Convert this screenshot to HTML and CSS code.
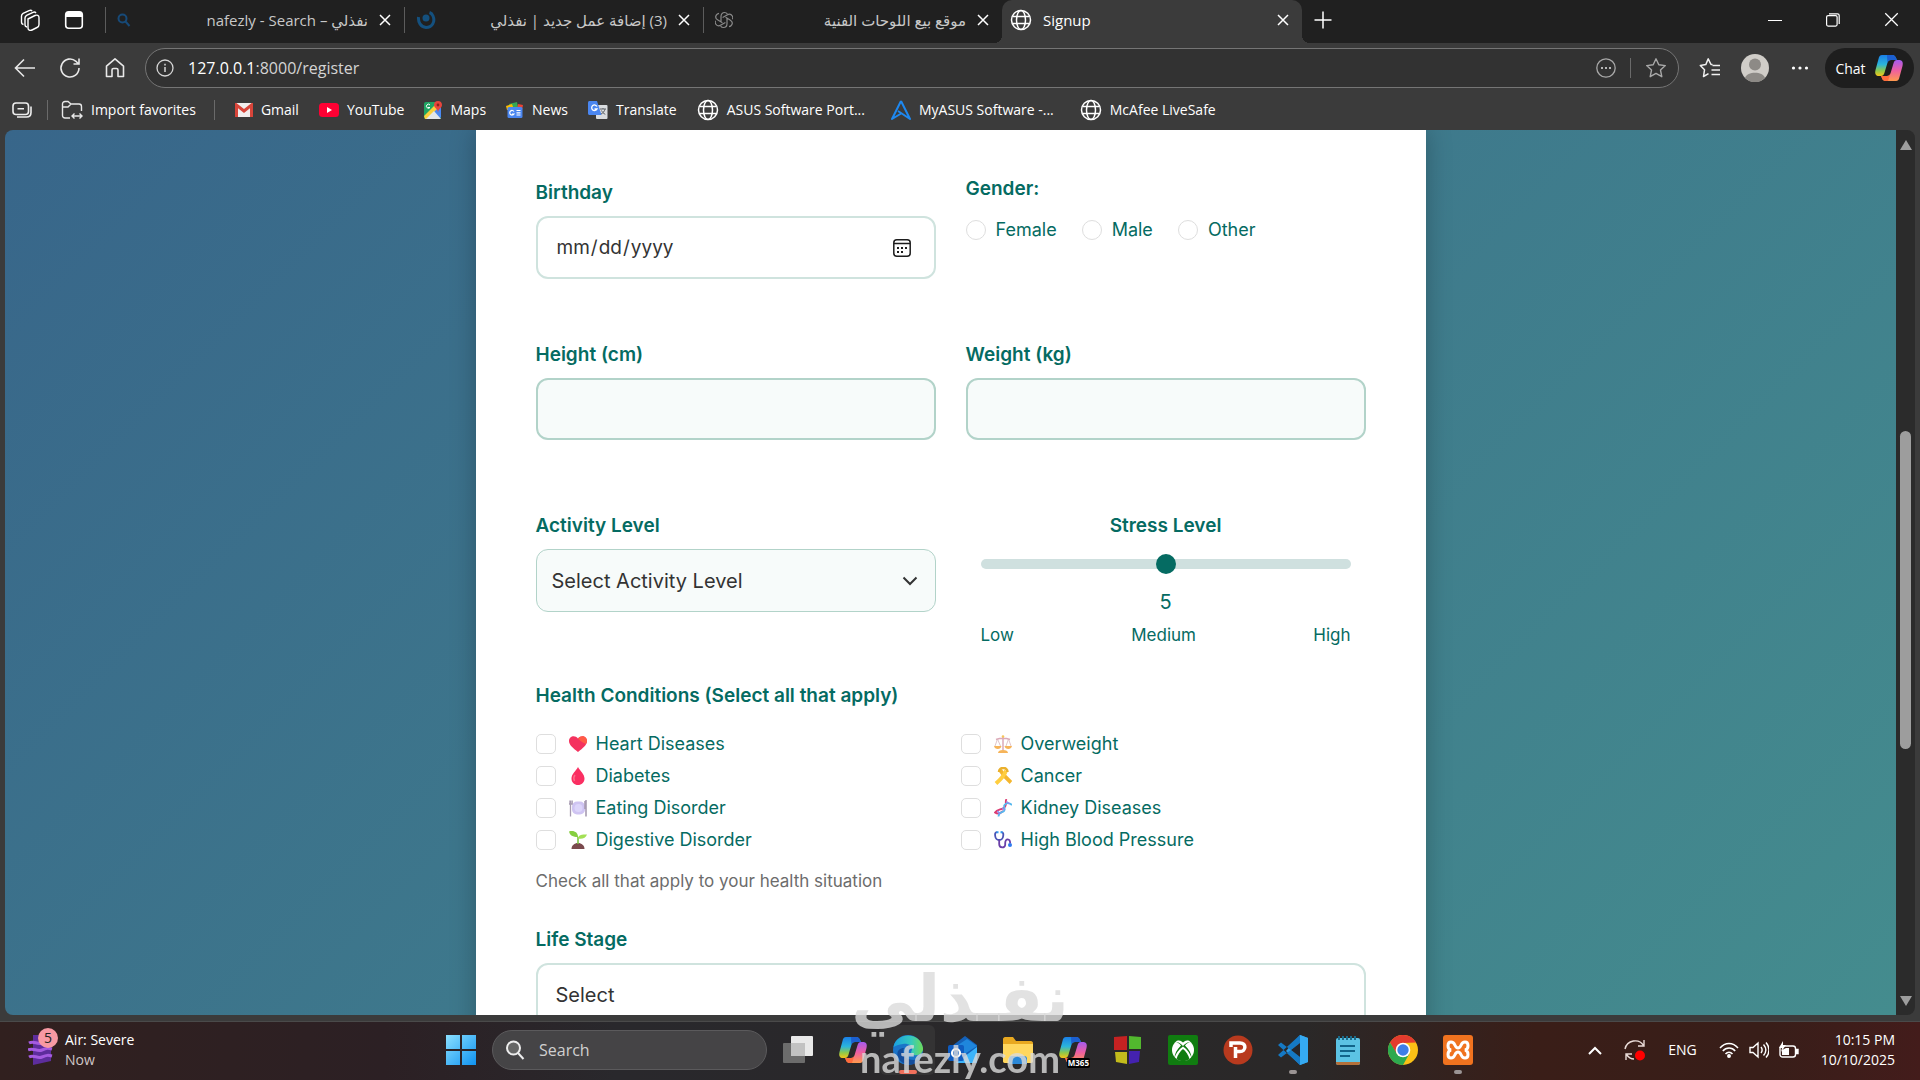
FILE: index.html
```html
<!DOCTYPE html>
<html lang="en">
<head>
  <meta charset="UTF-8">
  <title>Signup</title>
  <link rel="stylesheet" href="styles.css">
</head>
<body>

  <!-- shared icons -->
  <svg class="sprite" width="0" height="0" aria-hidden="true">
    <defs>
      <linearGradient id="cpBlue" x1="0" y1="0" x2="0" y2="1"><stop offset="0" stop-color="#1a7fe8"/><stop offset=".45" stop-color="#2bb5dc"/><stop offset=".75" stop-color="#8fc94a"/><stop offset="1" stop-color="#f5c518"/></linearGradient>
      <linearGradient id="cpPink" x1="0" y1="0" x2="0" y2="1"><stop offset="0" stop-color="#a45bf0"/><stop offset=".5" stop-color="#ee5fa0"/><stop offset="1" stop-color="#ff9a4d"/></linearGradient>
      <linearGradient id="edgeTop" x1="0" y1="0" x2="1" y2="0"><stop offset="0" stop-color="#1ba0e0"/><stop offset=".6" stop-color="#35c9bd"/><stop offset="1" stop-color="#6fdc57"/></linearGradient>
      <linearGradient id="winBlue" gradientUnits="userSpaceOnUse" x1="0" y1="0" x2="30" y2="30"><stop offset="0" stop-color="#8be0ff"/><stop offset="1" stop-color="#0f92f0"/></linearGradient>
    </defs>
    <symbol id="close" viewBox="0 0 12 12"><path d="M1 1l10 10M11 1L1 11" stroke="currentColor" stroke-width="1.5" fill="none"/></symbol>
    <symbol id="globe" viewBox="0 0 22 22"><g stroke="currentColor" stroke-width="1.5" fill="none"><circle cx="11" cy="11" r="9.5"/><ellipse cx="11" cy="11" rx="4.5" ry="9.5"/><path d="M2.500 7.500h17M2.500 14.500h17"/></g></symbol>
    <symbol id="copilot" viewBox="0 0 30 30">
      <path d="M8 2h10c3 0 4 2 4.800 5H17c-2 0-3 1-3.600 3l-3 10c-.6 2-1.600 3-3.400 3H5c-3 0-4.500-2-3.500-6L4.500 6C5 3.500 6 2 8 2z" fill="url(#cpBlue)"/>
      <path d="M13 2h5c3 0 4 2 4.800 5H17c-2 0-3 1-3.600 3z" fill="#1c5fd0"/>
      <path d="M22 28H12c-3 0-4-2-4.800-5H13c2 0 3-1 3.600-3l3-10c.6-2 1.600-3 3.400-3h2c3 0 4.500 2 3.500 6l-3 11c-.5 2.500-1.500 4-3.500 4z" fill="url(#cpPink)"/>
      <path d="M7.200 23H13c2 0 3-1 3.600-3L14 28h-2c-3 0-4-2-4.800-5z" fill="#ff6a3c"/>
    </symbol>
  </svg>

  <header class="browser">
    <div class="tab-strip">
      <div class="tab-actions">
        <button class="icon-btn" aria-label="Workspaces">
          <svg width="24" height="24" viewBox="0 0 24 24" fill="none" stroke="#fff" stroke-width="1.400"><path d="M10 11l7-3.500c2-1 4 0 4 2v7c0 1.500-.5 2.500-2 3l-5 2.500c-2 1-4 0-4-2z"/><path d="M9 19c-1.500-.2-2-1-2-2.500V10c0-1.200.6-2 1.600-2.600L15 4.300c1-.5 2.200-.4 3 .7"/><path d="M5.500 16.500C4 16.300 3.500 15.500 3.500 14V8c0-1.200.6-2 1.600-2.600l6-2.800c1.200-.5 2.400-.3 3 .6"/></svg>
        </button>
        <button class="icon-btn" aria-label="Tab actions">
          <svg width="20" height="20" viewBox="0 0 20 20"><rect x="1.700" y="1.700" width="16.600" height="16.600" rx="3" fill="none" stroke="#fff" stroke-width="1.600"/><path d="M2 2h16v5H2z" fill="#fff"/></svg>
        </button>
      </div>
      <div class="tab">
        <svg width="18" height="18" viewBox="0 0 18 18" fill="none" stroke="#174a78" stroke-width="2"><circle cx="5.500" cy="7.500" r="4"/><path d="M8.500 10.500l4 4.500"/></svg>
        <span class="tab-title" dir="rtl">نفذلي – nafezly - Search</span>
        <button class="icon-btn" aria-label="Close tab"><svg width="12" height="12"><use href="#close"/></svg></button>
      </div>
      <div class="tab">
        <svg width="20" height="20" viewBox="0 0 20 20"><circle cx="10" cy="8" r="3.500" fill="#14507e"/><path d="M2.500 7c-.5 5 2 10 7.500 10.500C16 17.500 19.500 12 17 6c-.6-1.500-2-3-3.500-3.500" fill="none" stroke="#14507e" stroke-width="3"/></svg>
        <span class="tab-title" dir="rtl">(3) إضافة عمل جديد | نفذلي</span>
        <button class="icon-btn" aria-label="Close tab"><svg width="12" height="12"><use href="#close"/></svg></button>
      </div>
      <div class="tab">
        <svg width="18" height="18" viewBox="0 0 18 18" fill="none" stroke="#8a8a8a" stroke-width="1.200"><path d="M6 10.700V5.500c0-2.300 1.500-4 3.500-4 1.200 0 2.200.5 2.900 1.400M7.600 6.500l4.500-2.600c2-1.100 4.200-.6 5.200 1.100.6 1 .6 2.200.2 3.200M10.600 6.300l4.500 2.600c2 1.200 2.600 3.300 1.600 5-.6 1-1.600 1.600-2.700 1.800M12 7.300v5.200c0 2.300-1.500 4-3.500 4-1.200 0-2.200-.5-2.900-1.400M10.400 11.500l-4.500 2.600c-2 1.100-4.200.6-5.200-1.100-.6-1-.6-2.200-.2-3.200M7.400 11.700L2.900 9.100C.9 7.900.3 5.800 1.300 4.100c.6-1 1.600-1.600 2.700-1.800"/></svg>
        <span class="tab-title" dir="rtl">موقع بيع اللوحات الفنية</span>
        <button class="icon-btn" aria-label="Close tab"><svg width="12" height="12"><use href="#close"/></svg></button>
      </div>
      <div class="tab active">
        <svg width="22" height="22"><use href="#globe"/></svg>
        <span class="tab-title">Signup</span>
        <button class="icon-btn" aria-label="Close tab"><svg width="12" height="12"><use href="#close"/></svg></button>
      </div>
      <button class="icon-btn new-tab" aria-label="New tab"><svg width="20" height="20" viewBox="0 0 20 20"><path d="M10 1.500v17M1.500 10h17" stroke="#fff" stroke-width="1.500"/></svg></button>
      <div class="window-controls">
        <button class="icon-btn" aria-label="Minimize"><svg width="14" height="14" viewBox="0 0 14 14"><path d="M0 7.500h14" stroke="#fff"/></svg></button>
        <button class="icon-btn" aria-label="Restore"><svg width="14" height="14" viewBox="0 0 14 14" fill="none" stroke="#fff" stroke-width="1.200"><rect x=".6" y="2.600" width="10.500" height="10.500" rx="1.500"/><path d="M3 .8h8.500c1 0 1.700.7 1.700 1.700V11"/></svg></button>
        <button class="icon-btn" aria-label="Close"><svg width="15" height="15" viewBox="0 0 12 12"><path d="M1 1l10 10M11 1L1 11" stroke="#fff"/></svg></button>
      </div>
    </div>

    <div class="toolbar">
      <button class="icon-btn" aria-label="Back"><svg width="22" height="22" viewBox="0 0 22 22" fill="none" stroke="#e8e8e8" stroke-width="1.600"><path d="M21 11H2M10 2.500L1.500 11l8.500 8.500"/></svg></button>
      <button class="icon-btn" aria-label="Refresh"><svg width="22" height="22" viewBox="0 0 22 22" fill="none" stroke="#e8e8e8" stroke-width="1.600"><path d="M20 11a9 9 0 1 1-3-6.700L19.500 7M20 1.500V7h-5.500"/></svg></button>
      <button class="icon-btn" aria-label="Home"><svg width="22" height="22" viewBox="0 0 22 22" fill="none" stroke="#e8e8e8" stroke-width="1.600" stroke-linejoin="round"><path d="M2.500 9.200L11 1.800l8.500 7.400v10.300h-5.500V13c0-1-.5-1.500-1.500-1.500h-3C8.500 11.500 8 12 8 13v6.500H2.500z"/></svg></button>
      <div class="address">
        <svg width="18" height="18" viewBox="0 0 18 18"><circle cx="9" cy="9" r="8" fill="none" stroke="#d6d6d6" stroke-width="1.300"/><path d="M9 8v5M9 4.800v1.600" stroke="#d6d6d6" stroke-width="1.500"/></svg>
        <span class="url"><b>127.0.0.1</b>:8000/register</span>
        <button class="icon-btn" aria-label="More"><svg width="20" height="20" viewBox="0 0 20 20"><circle cx="10" cy="10" r="9.200" fill="none" stroke="#a8a8a8" stroke-width="1.300"/><path d="M5 9h2v2H5zM9 9h2v2H9zM13 9h2v2h-2z" fill="#b8b8b8"/></svg></button>
        <i class="sep"></i>
        <button class="icon-btn" aria-label="Add to favorites"><svg width="22" height="22" viewBox="0 0 22 22" fill="none" stroke="#a8a8a8" stroke-width="1.400" stroke-linejoin="round"><path d="M11 1.800l2.800 6 6.500.8-4.800 4.500 1.300 6.600-5.800-3.300-5.800 3.300 1.300-6.600L1.700 8.600l6.500-.8z"/></svg></button>
      </div>
      <button class="icon-btn" aria-label="Favorites"><svg width="22" height="22" viewBox="0 0 22 22" fill="none" stroke="#f0f0f0" stroke-width="1.500" stroke-linejoin="round"><path d="M13.500 7.500H12L9.200 1.800 6.800 7.600l-5.500.9 4.200 4.300-1 6.700 5-2.800M13.500 8.500H21M12.500 13H21M12.500 17.500H21"/></svg></button>
      <button class="icon-btn" aria-label="Profile"><svg width="28" height="28" viewBox="0 0 28 28"><circle cx="14" cy="14" r="14" fill="#d0cdc8"/><circle cx="14" cy="10.500" r="6" fill="#8d8a86"/><path d="M4 24c2-7 18-7 20 0a14 14 0 0 1-20 0z" fill="#8d8a86"/></svg></button>
      <button class="icon-btn" aria-label="Settings and more"><svg width="18" height="18" viewBox="0 0 18 18" fill="#fff"><circle cx="2.500" cy="9" r="1.600"/><circle cx="9" cy="9" r="1.600"/><circle cx="15.500" cy="9" r="1.600"/></svg></button>
      <button class="chat">Chat <svg width="30" height="30"><use href="#copilot"/></svg></button>
    </div>

    <nav class="bookmarks">
      <button class="icon-btn" aria-label="Collections"><svg width="20" height="18" viewBox="0 0 20 18" fill="none" stroke="#eee" stroke-width="1.600"><rect x="1" y="2" width="15.500" height="11.500" rx="3"/><path d="M5.500 7.800h6.500M5 16h9.500c3 0 4.500-1.500 4.500-4.500V5.500"/></svg></button>
      <i class="sep"></i>
      <a href="#"><svg width="22" height="20" viewBox="0 0 22 20" fill="none" stroke="#e8e8e8" stroke-width="1.400"><path d="M9 18H4c-1.500 0-2.500-1-2.500-2.500V4C1.500 2.500 2.500 1.500 4 1.500h3L10 4h8c1.500 0 2.500 1 2.500 2.500V11M1.500 7H7l3-3M13.500 13.500L11 16l2.500 2.500M18.500 13.500L21 16l-2.500 2.500M11.500 16H21"/></svg>Import favorites</a>
      <i class="sep wide"></i>
      <a href="#"><svg width="18" height="14" viewBox="0 0 18 14"><rect width="18" height="14" rx="1" fill="#f1eeee"/><path d="M1.500 14V2L9 8l7.500-6v12" fill="none" stroke="#d8453a" stroke-width="3"/></svg>Gmail</a>
      <a href="#"><svg width="20" height="14" viewBox="0 0 20 14"><rect width="20" height="14" rx="3.500" fill="#ff0033"/><path d="M8 4l5 3-5 3z" fill="#fff"/></svg>YouTube</a>
      <a href="#"><svg width="18" height="18" viewBox="0 0 18 18"><rect y="1" width="17" height="17" rx="2" fill="#1fa463"/><path d="M9 10l8-5v11l-2 2z" fill="#4a89f3"/><path d="M0 15L14 1l3 3L3 18H1z" fill="#fbcf3b"/><path d="M2 18L10 10l7 8z" fill="#e4e7ea"/><path d="M14 0c2.500 0 4 1.600 4 4 0 3-4 3.500-4 8 0-4.500-4-5-4-8 0-2.400 1.500-4 4-4z" fill="#e8453c"/><circle cx="14" cy="4" r="1.400" fill="#8c241d"/><path d="M6 4A2 2 0 1 0 6 6.500H4" fill="none" stroke="#fff"/></svg>Maps</a>
      <a href="#"><svg width="18" height="16" viewBox="0 0 18 16"><path d="M3 2l8-2 1 5H4z" fill="#34a853"/><path d="M0 4l6-2 2 6H1z" fill="#fbbc04"/><path d="M12 2l5 1-1 5h-5z" fill="#ea4335"/><rect x="1.500" y="5" width="15" height="11" rx="1.500" fill="#4a86f0"/><path d="M8 9.500A2.300 2.300 0 1 0 8 12H6M10.500 8.500h4M10.500 10.800h4M10.500 13h4" stroke="#fff" fill="none" stroke-width="1.200"/></svg>News</a>
      <a href="#"><svg width="20" height="18" viewBox="0 0 20 18"><rect x="8" y="4" width="11.500" height="14" rx="1" fill="#d9dcdf"/><path d="M0 1.500C0 .7.700 0 1.500 0H9l4.500 14h-12C.7 14 0 13.300 0 12.500z" fill="#4a86f0"/><path d="M9 5.500A2.800 2.800 0 1 0 9 8H6.500" stroke="#fff" stroke-width="1.300" fill="none"/><path d="M12 8h6M15 7v1M17 8c-.5 2.500-2 4-4 5M13.500 9.500c.7 1.500 2 3 3.800 3.800" stroke="#5f6368" fill="none"/></svg>Translate</a>
      <a href="#" class="site"><svg width="22" height="22"><use href="#globe"/></svg>ASUS Software Port...</a>
      <a href="#" class="site"><svg width="20" height="20" viewBox="0 0 20 20" fill="none" stroke="#1e88f0" stroke-width="2" stroke-linejoin="round"><path d="M10 1L1 19l10-6M10 1l9 18-12-8"/></svg>MyASUS Software -...</a>
      <a href="#" class="site"><svg width="22" height="22"><use href="#globe"/></svg>McAfee LiveSafe</a>
    </nav>
  </header>

  <div class="viewport">
    <main class="page">
      <form class="card">
        <div class="row row-birth">
          <div class="field birthday">
            <label class="title" for="birthday">Birthday</label>
            <div class="control">
              <input class="input date" type="date" id="birthday">
              <svg class="calendar" width="18" height="18" viewBox="0 0 18 18"><rect x=".8" y=".8" width="16.400" height="16.400" rx="3" fill="none" stroke="#1d1d1d" stroke-width="1.500"/><path d="M1 4.500h16" stroke="#1d1d1d" stroke-width="1.300"/><path d="M4 8h2v2H4zM8 8h2v2H8zM12 8h2v2h-2zM4 12h2v2H4zM8 12h2v2H8z" fill="#1d1d1d"/></svg>
            </div>
          </div>
          <fieldset class="field gender">
            <legend class="title">Gender:</legend>
            <div class="radios">
              <label><input type="radio" name="gender" value="female">Female</label>
              <label><input type="radio" name="gender" value="male">Male</label>
              <label><input type="radio" name="gender" value="other">Other</label>
            </div>
          </fieldset>
        </div>

        <div class="row row-size">
          <div class="field">
            <label class="title" for="height">Height (cm)</label>
            <input class="input tinted" type="number" id="height">
          </div>
          <div class="field">
            <label class="title" for="weight">Weight (kg)</label>
            <input class="input tinted" type="number" id="weight">
          </div>
        </div>

        <div class="row row-activity">
          <div class="field">
            <label class="title" for="activity">Activity Level</label>
            <div class="control">
              <select class="input tinted thin" id="activity">
                <option>Select Activity Level</option>
              </select>
              <svg class="chevron" width="16" height="10" viewBox="0 0 16 10" fill="none" stroke="#333" stroke-width="2"><path d="M1.500 1.500L8 8l6.500-6.500"/></svg>
            </div>
          </div>
          <div class="field stress">
            <label class="title" for="stress">Stress Level</label>
            <input class="slider" type="range" id="stress" min="0" max="10" value="5">
            <output for="stress">5</output>
            <div class="scale"><span>Low</span><span>Medium</span><span>High</span></div>
          </div>
        </div>

        <fieldset class="conditions">
          <legend class="title">Health Conditions (Select all that apply)</legend>
          <div class="checks">
            <label><input type="checkbox" name="heart"><svg width="18" height="18" viewBox="0 0 18 18"><path d="M9 17C4 13 0 10 0 6c0-5 6-6.500 9-2.500C12 -.5 18 1 18 6c0 4-4 7-9 11z" fill="#f4325f"/><path d="M9 3.500C12 -.5 18 1 18 6c0 1-.5 2-1 3C14 8 11 6 9 3.500z" fill="#ff5b45"/></svg>Heart Diseases</label>
            <label><input type="checkbox" name="diabetes"><svg width="18" height="18" viewBox="0 0 18 18"><path d="M9 0c2 4 6.500 7 6.500 11.500 0 4-3 6.500-6.500 6.500s-6.500-2.500-6.500-6.500C2.500 7 7 4 9 0z" fill="#fa2f62"/><path d="M6 8c-1.500 2-1.500 4-.5 6" stroke="#ff6a88" stroke-width="1.500" fill="none"/></svg>Diabetes</label>
            <label><input type="checkbox" name="eating"><svg width="18" height="18" viewBox="0 0 18 18"><rect x="3" y="2.500" width="13" height="13" rx="5" fill="#cfc4f2"/><circle cx="9.500" cy="9" r="4" fill="#dcd5fa"/><path d="M1.500 5v12.500M0 1.500V5h3.200V1.500M1.600 1.500V5" stroke="#a79bb2" stroke-width="1.300" fill="none"/><path d="M17 1v16.500M16 2v8" stroke="#a79bb2" stroke-width="1.600"/></svg>Eating Disorder</label>
            <label><input type="checkbox" name="digestive"><svg width="18" height="18" viewBox="0 0 18 18"><path d="M2.500 18c0-3.500 3-6 6.500-6s6.500 2.500 6.500 6z" fill="#7a4a4d"/><path d="M9 13V6" stroke="#7cc242" stroke-width="1.600"/><path d="M9 6C7 6 1 6 0 .500 5-1 9 1.500 9 6z" fill="#86cf3f"/><path d="M9 7.500C9 4 13 3 18 3.500 17 7 13 8.500 9 7.500z" fill="#a3e055"/></svg>Digestive Disorder</label>
            <label><input type="checkbox" name="overweight"><svg width="18" height="18" viewBox="0 0 18 18"><path d="M9 1v14M2 4.500c4-1.500 10-1.500 14 0" stroke="#dca9b8" stroke-width="1.500" fill="none"/><path d="M3.500 4L1 11M3.500 4L6.500 11M14.500 4L12 11M14.500 4L17 11" stroke="#d8b6bd" stroke-width=".8"/><path d="M0 11h7.500c-.5 4-7 4-7.500 0zM10.500 11H18c-.5 4-7 4-7.500 0zM4 18c0-2 2-3 5-3s5 1 5 3z" fill="#f6b45a"/><circle cx="9" cy="1.500" r="1.300" fill="#f6c65a"/></svg>Overweight</label>
            <label><input type="checkbox" name="cancer"><svg width="18" height="18" viewBox="0 0 18 18"><path d="M6 3C8 6 13 12 17 15.500" stroke="#f4b62e" stroke-width="4" fill="none"/><path d="M12 3.500C11 7 6 13 2 16.500" stroke="#ffce3f" stroke-width="4" fill="none"/><path d="M5 5c0-5.500 8.500-5.500 8.500 0" stroke="#eab02c" stroke-width="2.500" fill="none"/></svg>Cancer</label>
            <label><input type="checkbox" name="kidney"><svg width="18" height="18" viewBox="0 0 18 18" fill="none"><path d="M12.500 0c-2 3 1 6-2 8.500S3 10 1 13.500c3 2 6 .500 8-1.500" stroke="#dc3b72" stroke-width="1.800"/><path d="M18 6c-3-3-6-2-7.500 0S12 10 10 12s-5 0-5.500 5.500" stroke="#56b7ee" stroke-width="1.800"/><path d="M12.500 2.500l3 2.500M3.500 12l2.500 3M8 9l3 2" stroke="#8b8df0" stroke-width="1.400"/></svg>Kidney Diseases</label>
            <label><input type="checkbox" name="pressure"><svg width="18" height="18" viewBox="0 0 18 18" fill="none"><path d="M3 1.200C1 1.200.900 3 1.200 5c.3 2.500 1.500 4 4 4s3.700-1.500 4-4c.3-2 .2-3.800-1.800-3.800" stroke="#4a53b5" stroke-width="1.800"/><path d="M5.200 9v4c0 4.500 6 4.500 6 .500V12c0-5 5-5 5 .500" stroke="#6a3fa8" stroke-width="1.800"/><circle cx="16" cy="14" r="2" fill="#2f7bf0"/><path d="M2.500 1.200h2M6.500 1.200h2" stroke="#2f9bf0" stroke-width="2"/></svg>High Blood Pressure</label>
          </div>
          <p class="hint">Check all that apply to your health situation</p>
        </fieldset>

        <div class="field">
          <label class="title" for="stage">Life Stage</label>
          <select class="input" id="stage">
            <option>Select</option>
          </select>
        </div>
      </form>
    </main>
    <div class="scrollbar"><i class="up"></i><i class="thumb"></i><i class="down"></i></div>
  </div>

  <footer class="taskbar">
    <div class="weather">
      <svg width="25" height="30" viewBox="0 0 25 30" fill="none"><path d="M5 0h14l4 8v18L5 30z" fill="#5d2d9c"/><path d="M1 8c5-3 8 2 13 0s6-2 10-1M0 15c5-3 9 2 14 0s6-2 10-1M1 22c5-3 8 2 13 0s6-2 10-1" stroke="#a45be0" stroke-width="3"/></svg>
      <span class="badge">5</span>
      <div><b>Air: Severe</b><br>Now</div>
    </div>

    <div class="apps">
      <button class="app" aria-label="Start"><svg width="30" height="30" viewBox="0 0 30 30" fill="url(#winBlue)"><path d="M0 0h14v14H0zM16 0h14v14H16zM0 16h14v14H0zM16 16h14v14H16z"/></svg></button>
      <label class="search">
        <svg width="20" height="20" viewBox="0 0 20 20" fill="none" stroke="#eee" stroke-width="2"><circle cx="8.500" cy="8" r="6.500" fill="#666"/><path d="M13 13l5.500 6"/></svg>
        <input type="text" placeholder="Search" aria-label="Search">
      </label>
      <button class="app" aria-label="Task view"><svg width="30" height="28" viewBox="0 0 30 28"><rect y="7" width="22" height="20" rx="1" fill="#6c6c6c"/><rect x="8" width="22" height="20" rx="1" fill="#e9e9e9"/><path d="M8 7h14v13H8z" fill="#c2c2c2"/></svg></button>
      <button class="app" aria-label="Copilot"><svg width="30" height="30"><use href="#copilot"/></svg></button>
      <button class="app focused" aria-label="Edge"><svg width="30" height="30" viewBox="0 0 30 30"><circle cx="15" cy="15" r="15" fill="#1b74c8"/><path d="M.5 12C3-3 27-4 30 13c.5 5-4 8-9 7-4-1-3-3-2-5 1-4-4-7-9-6-4 .5-8 2-9.500 3z" fill="url(#edgeTop)"/><path d="M11 13c-3 7 3 15 16 11-5 8-18 8-22-2-2-5 1-9 6-9z" fill="#124d9c"/></svg></button>
      <button class="app" aria-label="Outlook"><svg width="30" height="30" viewBox="0 0 30 30"><path d="M4 11L17 1l12 9v18H8z" fill="#1460b8"/><path d="M7 12L19 4l10 7-14 9z" fill="#1f86dc"/><path d="M29 12v13c0 2-1 3-3 3H8z" fill="#3cb4fa"/><rect y="10" width="16" height="16" rx="2" fill="#0f5cc0"/><circle cx="8" cy="18" r="4" fill="none" stroke="#fff" stroke-width="2.200"/></svg></button>
      <button class="app" aria-label="File Explorer"><svg width="30" height="28" viewBox="0 0 30 28"><path d="M0 3c0-1 1-2 2-2h8l3 4h15c1 0 2 1 2 2v18c0 1-1 2-2 2H2c-1 0-2-1-2-2z" fill="#e8a820"/><path d="M0 8h30v17c0 1-1 2-2 2H2c-1 0-2-1-2-2z" fill="#ffd75e"/><path d="M6 28v-5c0-2 1-3 3-3h12c2 0 3 1 3 3v5z" fill="#2b88d8"/></svg></button>
      <button class="app" aria-label="Microsoft 365"><svg width="30" height="30"><use href="#copilot"/></svg><span class="tag">M365</span></button>
      <button class="app" aria-label="Color blocks"><svg width="28" height="30" viewBox="0 0 28 30"><path d="M0 2l13-1v14H0z" fill="#c52222"/><path d="M15 1l12 1v12H15z" fill="#52b82e"/><path d="M1 17h12v12L2 27z" fill="#c3bb1c"/><path d="M15 16h11l-1 11-10 2z" fill="#4422b0"/></svg></button>
      <button class="app" aria-label="Xbox"><svg width="30" height="30" viewBox="0 0 30 30"><rect width="30" height="30" rx="2" fill="#107c10"/><circle cx="15" cy="15" r="11" fill="#fff"/><path d="M8 5.500c2.500-.5 5 .5 7 2 2-1.500 4.500-2.500 7-2-4-3-10-3-14 0z" fill="#107c10"/><path d="M7 7c3-.5 6 1.500 8 4 2-2.500 5-4.500 8-4-2-.2-4 1-6 3.500 4 4 6.500 8 6.500 12.500-1-4-4-8.500-8.500-11.500C10.500 14.500 7.500 19 6.500 23 6.500 18.500 9 14.500 13 10.500 11 8 9 6.800 7 7z" fill="#107c10"/><path d="M8.500 24c1-4 4-8 6.500-10 2.500 2 5.500 6 6.500 10-4 3-9 3-13 0z" fill="#107c10"/></svg></button>
      <button class="app" aria-label="PSIM"><svg width="30" height="30" viewBox="0 0 30 30"><circle cx="15" cy="15" r="14.500" fill="#b83a1e"/><path d="M12.500 23V12M8 12V8h9c7 0 6 8.500 0 8.500h-4" fill="none" stroke="#fff" stroke-width="3.500"/></svg></button>
      <button class="app open" aria-label="Visual Studio Code"><svg width="30" height="30" viewBox="0 0 30 30"><path d="M22 0l8 3v24l-8 3L8 16z" fill="#2e9ce6"/><path d="M0 10l3-2.500L22 22v8zM0 20l3 2.500L22 8V0z" fill="#1579c4"/><path d="M22 8v14l-9-7z" fill="#26262a"/><path d="M22 0l8 3v24l-8 3z" fill="#35aaf2"/></svg></button>
      <button class="app" aria-label="Notepad"><svg width="24" height="30" viewBox="0 0 24 30"><rect y="3" width="24" height="27" rx="2" fill="#5cc3e4"/><path d="M0 27h24v1c0 1-1 2-2 2H2c-1 0-2-1-2-2z" fill="#b4703a"/><path d="M4 11h15M4 16h15M4 21h10" stroke="#12648a" stroke-width="2"/><path d="M3 1v4M7 1v4M11 1v4M15 1v4M19 1v4" stroke="#1b6c8c" stroke-width="2"/></svg></button>
      <button class="app" aria-label="Chrome"><svg width="30" height="30" viewBox="0 0 30 30"><circle cx="15" cy="15" r="15" fill="#fbc116"/><path d="M2 7.500a15 15 0 0 1 26 0L15 8l-6.500 11z" fill="#e33b2e"/><path d="M2 7.500A15 15 0 0 0 15 30l6.500-11.500L9 19z" fill="#2da94f"/><circle cx="15" cy="15" r="7.300" fill="#fff"/><circle cx="15" cy="15" r="5.700" fill="#3f7ee8"/></svg></button>
      <button class="app open" aria-label="XAMPP"><svg width="30" height="30" viewBox="0 0 30 30"><rect width="30" height="30" rx="3" fill="#f0731f"/><path d="M8 7c-4 0-4 7 0 8-4 1-4 8 0 8 5 0 3-6 7-6s2 6 7 6c4 0 4-7 0-8 4-1 4-8 0-8-5 0-3 6-7 6s-2-6-7-6z" fill="none" stroke="#fff" stroke-width="3"/></svg></button>
    </div>

    <div class="tray">
      <svg width="14" height="9" viewBox="0 0 14 9"><path d="M1 8l6-6 6 6" fill="none" stroke="#fff" stroke-width="2"/></svg>
      <svg width="22" height="22" viewBox="0 0 22 22" fill="none" stroke="#eadcd8" stroke-width="1.400"><path d="M1 10C3 1 15-1 19.500 6.500M20 1v6h-6M10 20c-3 0-5.500-1.500-7.500-4.500M2 21v-6h6"/><circle cx="16" cy="16.500" r="5" fill="red" stroke="none"/></svg>
      <span>ENG</span>
      <div class="status">
        <svg width="20" height="16" viewBox="0 0 20 16" fill="none" stroke="#fff" stroke-width="1.500"><path d="M1 6c5-6 13-6 18 0M3.800 9c3.500-4 9-4 12.400 0M6.500 12c2-2.500 5-2.500 7 0"/><circle cx="10" cy="14" r="1.200" fill="#fff"/></svg>
        <svg width="20" height="18" viewBox="0 0 20 18" fill="none" stroke="#fff" stroke-width="1.400"><path d="M1 6.500h3L9 2v14l-5-4.500H1zM12 6c1.500 2 1.500 4 0 6M14.500 3.500c3 3.500 3 7.500 0 11M17 1.500c4 4.500 4 10.500 0 15"/></svg>
        <svg width="20" height="18" viewBox="0 0 20 18" fill="none" stroke="#fff" stroke-width="1.400"><rect x="1" y="5" width="15.500" height="11" rx="2.500"/><path d="M17 8.500h2v4h-2z" fill="#fff"/><path d="M3 14V9l4-2h3v7z" fill="#fff" stroke="none"/><path d="M4 0L0 7h3l-1 4 5-7H4z" fill="#fff" stroke="none"/></svg>
      </div>
      <div class="clock">10:15 PM<br>10/10/2025</div>
    </div>
  </footer>

  <div class="watermark">
    <span class="wm-ar" lang="ar" dir="rtl">نفـذلي</span>
    <span class="wm-en">nafezly.com</span>
  </div>
</body>
</html>
```

FILE: styles.css
```css
* {
  box-sizing: border-box;
}

body {
  margin: 0;
  height: 100vh;
  display: flex;
  flex-direction: column;
  overflow: hidden;
  background: #3b3b3b;
  color: #fff;
  font-family: "Open Sans", "DejaVu Sans", sans-serif;
  font-size: 14px;
}

.sprite {
  position: absolute;
}

svg {
  display: block;
  flex: none;
}

button {
  border: none;
  padding: 0;
  background: none;
  color: inherit;
  font: inherit;
  cursor: pointer;
}

.icon-btn {
  display: flex;
  align-items: center;
  justify-content: center;
}

.sep {
  width: 1px;
  height: 20px;
  background: #6a6a6a;
}

/* ---- tabs ---- */
.tab-strip {
  display: flex;
  align-items: center;
  height: 43px;
  padding-bottom: 4px;
  background: #202020;
}

.tab-actions {
  display: flex;
  align-items: center;
  gap: 22px;
  width: 105px;
  padding-left: 18px;
}

.tab {
  display: flex;
  align-items: center;
  gap: 11px;
  flex: 0 1 299px;
  height: 26px;
  padding: 0 13px 0 11px;
  border-left: 1px solid #5c5c5c;
  color: #c8c8c8;
}

.tab .icon-btn {
  color: #fff;
}

.tab-title {
  flex: 1;
  font-size: 15px;
  white-space: nowrap;
}

.tab.active {
  position: relative;
  flex-basis: 300px;
  height: 43px;
  margin-bottom: -4px;
  padding: 0 13px 4px 8px;
  border: none;
  border-radius: 10px 10px 0 0;
  background: #3b3b3b;
  color: #fff;
}

.tab.active::before,
.tab.active::after {
  content: "";
  position: absolute;
  bottom: 0;
  width: 8px;
  height: 8px;
  background: radial-gradient(circle at 0 0, transparent 8px, #3b3b3b 8px);
}

.tab.active::before {
  left: -8px;
}

.tab.active::after {
  right: -8px;
  background: radial-gradient(circle at 100% 0, transparent 8px, #3b3b3b 8px);
}

.new-tab {
  width: 42px;
}

.window-controls {
  display: flex;
  margin-left: auto;
}

.window-controls .icon-btn {
  width: 58px;
}

/* ---- address bar ---- */
.toolbar {
  display: flex;
  align-items: center;
  height: 50px;
  padding: 0 6px 0 2px;
}

.toolbar > .icon-btn {
  width: 45px;
  height: 40px;
}

.address {
  flex: 1;
  display: flex;
  align-items: center;
  gap: 14px;
  height: 40px;
  margin: 0 8px;
  padding: 0 11px 0 10px;
  border: 1px solid #757575;
  border-radius: 20px;
  background: #323232;
}

.url {
  flex: 1;
  font-size: 16px;
  color: #d4d4d4;
}

.url b {
  font-weight: 400;
  color: #fff;
}

.chat {
  display: flex;
  align-items: center;
  justify-content: center;
  gap: 8px;
  width: 89px;
  height: 40px;
  margin-left: 3px;
  border-radius: 20px;
  background: #1e1e1e;
}

/* ---- bookmarks ---- */
.bookmarks {
  display: flex;
  align-items: center;
  height: 33px;
  margin-bottom: 4px;
  padding-left: 12px;
}

.bookmarks a {
  display: flex;
  align-items: center;
  gap: 8px;
  margin-right: 20px;
  color: #fff;
  text-decoration: none;
  white-space: nowrap;
}

.bookmarks .site {
  margin-right: 26px;
}

.bookmarks .sep {
  margin: 0 13px 0 15px;
}

.bookmarks .wide {
  margin: 0 20px 0 -2px;
}

/* ---- page ---- */
.viewport {
  flex: 1;
  min-height: 0;
  display: flex;
  margin: 0 5px 6px;
  border-radius: 8px;
  overflow: hidden;
}

.page {
  flex: 1;
  overflow: hidden;
  background: linear-gradient(135deg, #38668a, #448c8e);
}

.card {
  max-width: 950px;
  margin: 0 auto;
  padding: 46px 60px 60px;
  background: #fff;
  box-shadow: 0 0 24px rgba(0, 0, 0, 0.25);
  color: #056b62;
  font-family: Inter, sans-serif;
  font-size: 18px;
  line-height: 24px;
}

.row {
  display: grid;
  grid-template-columns: 1fr 1fr;
  gap: 30px;
}

.row-birth {
  margin-bottom: 63px;
}

.row-size {
  margin-bottom: 73px;
}

.row-activity {
  margin-bottom: 36px;
}

fieldset {
  min-width: 0;
  margin: 0;
  padding: 0;
  border: none;
}

.title {
  display: block;
  margin-bottom: 10px;
  padding: 0;
  font-size: 19px;
  font-weight: 600;
  line-height: 26px;
}

.birthday {
  padding-top: 4px;
}

.control {
  position: relative;
}

.input {
  display: block;
  width: 100%;
  height: 63px;
  padding: 0 18px;
  border: 2px solid #cfe3de;
  border-radius: 12px;
  background: #fff;
  color: #333;
  font-family: Inter, sans-serif;
  font-size: 20px;
  appearance: none;
}

.input.date {
  font-size: 19px;
}

.input.date::-webkit-calendar-picker-indicator {
  opacity: 0;
}

.input.tinted {
  border-color: #b2d3c9;
  background: #f7fbfa;
}

input.tinted {
  height: 62px;
}

.input.thin {
  padding: 0 15px;
  border-width: 1px;
}

.calendar,
.chevron {
  position: absolute;
  top: 50%;
  right: 25px;
  transform: translateY(-50%);
  pointer-events: none;
}

.chevron {
  right: 18px;
}

.gender .title {
  margin-bottom: 16px;
}

.radios {
  display: flex;
  gap: 25px;
}

.radios label,
.checks label {
  display: flex;
  align-items: center;
}

.radios label {
  gap: 10px;
}

input[type="radio"],
input[type="checkbox"] {
  flex: none;
  appearance: none;
  width: 20px;
  height: 20px;
  margin: 0;
  border: 1px solid #dedede;
  border-radius: 50%;
  background: #fff;
}

input[type="checkbox"] {
  border-radius: 5px;
}

.stress {
  padding: 0 15px;
  text-align: center;
}

.stress .title {
  margin-bottom: 20px;
}

.slider {
  display: block;
  appearance: none;
  width: 100%;
  height: 10px;
  margin: 0 0 21px;
  border-radius: 5px;
  background: #cfe0df;
}

.slider::-webkit-slider-thumb {
  appearance: none;
  width: 20px;
  height: 20px;
  border-radius: 50%;
  background: #056b62;
}

.stress output {
  display: block;
  margin-bottom: 9px;
  font-size: 20px;
}

.scale {
  display: flex;
  justify-content: space-between;
  font-size: 17px;
}

.conditions {
  margin-bottom: 34px;
}

.conditions .title {
  margin-bottom: 19px;
}

.checks {
  display: grid;
  grid-template-columns: 1fr 1fr;
  grid-template-rows: repeat(4, 32px);
  grid-auto-flow: column;
  column-gap: 20px;
}

.checks svg {
  margin: 0 9px 0 13px;
}

.hint {
  margin: 13px 0 0;
  color: #6c6c6c;
  font-size: 17px;
}

/* ---- scrollbar ---- */
.scrollbar {
  position: relative;
  width: 19px;
  background: #2b2b2b;
}

.scrollbar i {
  position: absolute;
  left: 4px;
}

.scrollbar .thumb {
  top: 34%;
  width: 11px;
  height: 36%;
  border-radius: 6px;
  background: #9d9d9d;
}

.scrollbar .up {
  top: 10px;
  border: 6px solid transparent;
  border-top: none;
  border-bottom: 10px solid #9d9d9d;
}

.scrollbar .down {
  bottom: 9px;
  border: 6px solid transparent;
  border-bottom: none;
  border-top: 10px solid #9d9d9d;
}

/* ---- taskbar ---- */
.taskbar {
  display: grid;
  grid-template-columns: 1fr auto 1fr;
  align-items: center;
  height: 59px;
  padding: 0 25px 2px 28px;
  border-top: 1px solid #4a4a4a;
  background: linear-gradient(90deg, #31201f, #2c2024 20%, #29282c 32%, #2a2828 68%, #3a1e18 80%, #381e19 92%, #431c1b);
  line-height: 20px;
}

.weather {
  position: relative;
  display: flex;
  align-items: center;
  gap: 12px;
  color: #cfc6c6;
}

.weather b {
  color: #fff;
  font-weight: 400;
}

.badge {
  position: absolute;
  top: -2px;
  left: 10px;
  width: 20px;
  height: 20px;
  border-radius: 50%;
  background: #f799a3;
  color: #222;
  text-align: center;
}

.apps {
  display: flex;
  align-items: center;
  margin-left: -5px;
}

.app {
  position: relative;
  display: flex;
  align-items: center;
  justify-content: center;
  width: 55px;
  height: 50px;
}

.app.focused {
  border-radius: 6px;
  background: #343334;
}

.app.open::after,
.app.focused::after {
  content: "";
  position: absolute;
  bottom: 1px;
  width: 8px;
  height: 4px;
  border-radius: 2px;
  background: #9b9494;
}

.app.focused::after {
  width: 18px;
  background: #f0705c;
}

.tag {
  position: absolute;
  right: 10px;
  bottom: 7px;
  padding: 0 1px;
  border-radius: 2px;
  background: #000;
  font-size: 8px;
  font-weight: 700;
  line-height: 10px;
}

.search {
  display: flex;
  align-items: center;
  gap: 14px;
  width: 275px;
  height: 40px;
  margin: 0 3px 0 4px;
  padding: 0 12px;
  border: 1px solid #5b5a5c;
  border-radius: 20px;
  background: #454446;
}

.search input {
  flex: 1;
  min-width: 0;
  padding: 0;
  border: none;
  outline: none;
  background: none;
  color: #fff;
  font: inherit;
  font-size: 16px;
}

.search input::placeholder {
  color: #d0d0d0;
}

.tray,
.status {
  display: flex;
  align-items: center;
}

.tray {
  justify-content: flex-end;
  gap: 22px;
}

.status {
  gap: 10px;
}

.clock {
  text-align: right;
}

/* ---- watermark ---- */
.watermark {
  position: fixed;
  left: 0;
  right: 0;
  bottom: 0;
  display: flex;
  flex-direction: column;
  align-items: center;
  color: rgba(219, 219, 219, 0.8);
  font-weight: 700;
  pointer-events: none;
}

.wm-ar {
  font-family: "DejaVu Sans", sans-serif;
  font-size: 64px;
  line-height: 74px;
}

.wm-en {
  font-family: Lato, sans-serif;
  font-size: 38px;
  line-height: 44px;
}
```
